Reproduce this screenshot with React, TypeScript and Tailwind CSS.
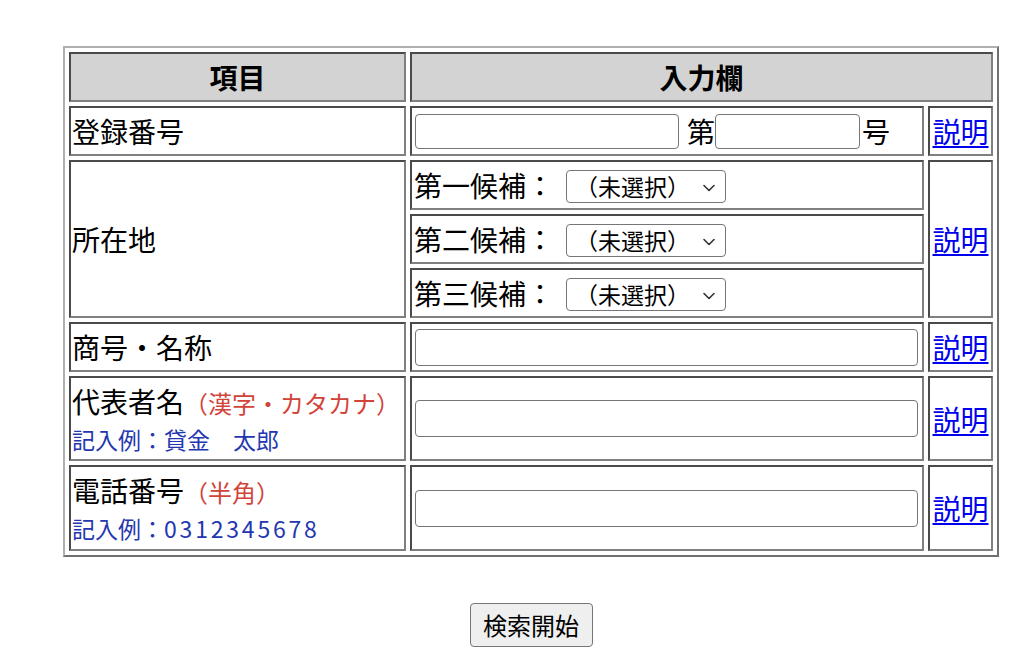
const cell =
  "border-2 border-t-[#4a4a4a] border-l-[#4a4a4a] border-r-[#808080] border-b-[#808080] p-[1px] align-middle";

function Candidate({ label }: { label: string }) {
  return (
    <div className="flex items-center">
      <span className="ml-[1px]">{label}</span>
      <div className="relative ml-[12px] mt-[3px] flex h-[33px] w-[160px] items-center rounded-[4px] border border-[#767676] bg-white">
        <span className="pl-[8px] text-[23px] leading-none">（未選択）</span>
        <svg
          viewBox="0 0 14 14"
          className="absolute right-[9px] top-[10px] h-[14px] w-[14px]"
          fill="none"
          stroke="#333"
          strokeWidth="1.6"
          strokeLinecap="round"
          strokeLinejoin="round"
        >
          <path d="M2 4.5 L7 9.5 L12 4.5" />
        </svg>
      </div>
    </div>
  );
}

function Help() {
  return (
    <a href="#" className="text-[28px] leading-none text-[#0000ee] underline underline-offset-[3px]">
      説明
    </a>
  );
}

const wideInput = "ml-[2px] h-[37px] w-[503px] rounded-[4px] border border-[#767676] bg-white";

export default function App() {
  return (
    <div
      className="min-h-[660px] bg-white pl-[63px] pt-[46px] text-[28px] text-black"
      style={{ fontFamily: '"Noto Sans CJK JP", "Noto Sans", sans-serif' }}
    >
      <table className="w-[936px] border-separate border-spacing-[4px] border-2 border-t-[#b0b0b0] border-l-[#b0b0b0] border-r-[#707070] border-b-[#707070]">
        <tbody>
          <tr>
            <th className={`${cell} h-[50px] w-[337px] bg-[#d3d3d3] text-center font-bold`}>項目</th>
            <th colSpan={2} className={`${cell} h-[50px] bg-[#d3d3d3] text-center font-bold`}>
              入力欄
            </th>
          </tr>
          <tr>
            <td className={`${cell} h-[50px]`}>登録番号</td>
            <td className={`${cell} h-[50px] w-[514px]`}>
              <div className="flex items-center">
                <input className="ml-[2px] h-[35px] w-[264px] rounded-[4px] border border-[#767676] bg-white" />
                <span className="ml-[8px]">第</span>
                <input className="h-[35px] w-[145px] rounded-[4px] border border-[#767676] bg-white" />
                <span className="ml-[2px]">号</span>
              </div>
            </td>
            <td className={`${cell} h-[50px] w-[65px] text-center`}>
              <Help />
            </td>
          </tr>
          <tr>
            <td rowSpan={3} className={cell}>
              所在地
            </td>
            <td className={`${cell} h-[50px]`}>
              <Candidate label="第一候補：" />
            </td>
            <td rowSpan={3} className={`${cell} text-center`}>
              <Help />
            </td>
          </tr>
          <tr>
            <td className={`${cell} h-[50px]`}>
              <Candidate label="第二候補：" />
            </td>
          </tr>
          <tr>
            <td className={`${cell} h-[50px]`}>
              <Candidate label="第三候補：" />
            </td>
          </tr>
          <tr>
            <td className={`${cell} h-[50px]`}>商号・名称</td>
            <td className={`${cell} h-[50px]`}>
              <input className={wideInput} />
            </td>
            <td className={`${cell} h-[50px] text-center`}>
              <Help />
            </td>
          </tr>
          <tr>
            <td className={`${cell} h-[85px]`}>
              <div className="leading-[38px]">
                代表者名<span className="text-[24px] text-[#d2433a]">（漢字・カタカナ）</span>
              </div>
              <div className="text-[23px] leading-[34px] text-[#2437b0]">記入例：貸金　太郎</div>
            </td>
            <td className={`${cell} h-[85px]`}>
              <input className={wideInput} />
            </td>
            <td className={`${cell} h-[85px] text-center`}>
              <Help />
            </td>
          </tr>
          <tr>
            <td className={`${cell} h-[86px]`}>
              <div className="leading-[38px]">
                電話番号<span className="text-[24px] text-[#d2433a]">（半角）</span>
              </div>
              <div className="text-[23px] leading-[34px] text-[#2437b0]">
                記入例：<span className="tracking-[2.8px]">0312345678</span>
              </div>
            </td>
            <td className={`${cell} h-[86px]`}>
              <input className={wideInput} />
            </td>
            <td className={`${cell} h-[86px] text-center`}>
              <Help />
            </td>
          </tr>
        </tbody>
      </table>
      <div className="mt-[46px] flex w-[936px] justify-center">
        <button className="h-[44px] w-[123px] rounded-[4px] border border-[#767676] bg-[#efefef] text-[24px] leading-none text-black">
          検索開始
        </button>
      </div>
    </div>
  );
}
